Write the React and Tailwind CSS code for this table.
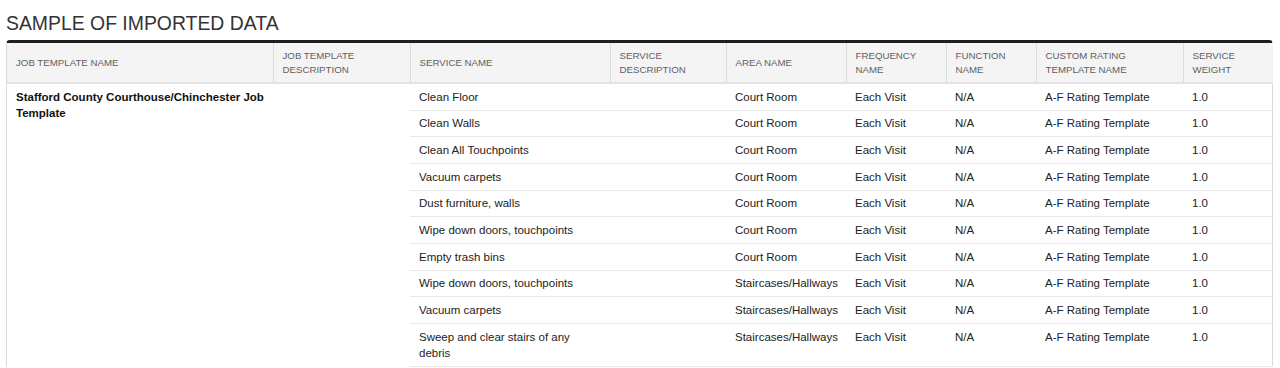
import React from "react";

const rows = [
  ["Clean Floor", "Court Room"],
  ["Clean Walls", "Court Room"],
  ["Clean All Touchpoints", "Court Room"],
  ["Vacuum carpets", "Court Room"],
  ["Dust furniture, walls", "Court Room"],
  ["Wipe down doors, touchpoints", "Court Room"],
  ["Empty trash bins", "Court Room"],
  ["Wipe down doors, touchpoints", "Staircases/Hallways"],
  ["Vacuum carpets", "Staircases/Hallways"],
  ["Sweep and clear stairs of any debris", "Staircases/Hallways"],
];

const headers = [
  "Job Template Name",
  "Job Template Description",
  "Service Name",
  "Service Description",
  "Area Name",
  "Frequency Name",
  "Function Name",
  "Custom Rating Template Name",
  "Service Weight",
];

const widths = [266, 137, 200, 116, 120, 100, 90, 147, 90];

export default function App() {
  return (
    <div
      className="bg-white w-[1280px] h-[368px] overflow-hidden"
      style={{ fontFamily: '"Liberation Sans", Arial, sans-serif' }}
    >
      <h1 className="pt-[12px] pl-[6px] text-[19.4px] leading-[22px] text-[#333] font-normal mb-[6px]">
        SAMPLE OF IMPORTED DATA
      </h1>
      <div className="ml-[6px] w-[1267px] border-t-[3px] border-t-[#1e1e1e] border-x border-x-[#d9d9d9] rounded-t-[4px]">
        <table className="w-full table-fixed border-collapse">
          <colgroup>
            {widths.map((w, i) => (
              <col key={i} style={{ width: w }} />
            ))}
          </colgroup>
          <thead>
            <tr className="bg-[#f4f4f4]">
              {headers.map((h, i) => (
                <th
                  key={i}
                  className={`text-left align-middle font-normal uppercase text-[9.7px] leading-[14px] text-[#5f5f5f] pl-[9px] pr-[8px] pt-[6px] pb-[5px] h-[40px] border-b-2 border-b-[#e3e3e3] ${
                    i > 0 ? "border-l border-l-[#dcdcdc]" : ""
                  }`}
                >
                  {h}
                </th>
              ))}
            </tr>
          </thead>
          <tbody className="text-[11.5px] leading-[16.67px] text-[#222]">
            {rows.map((r, i) => (
              <tr key={i}>
                {i === 0 && (
                  <>
                    <td
                      rowSpan={rows.length}
                      className="align-top pl-[9px] pr-[6px] pt-[4.5px] font-bold text-[#111]"
                    >
                      Stafford County Courthouse/Chinchester Job Template
                    </td>
                    <td rowSpan={rows.length} className="align-top" />
                  </>
                )}
                {[r[0], "", r[1], "Each Visit", "N/A", "A-F Rating Template", "1.0"].map(
                  (c, j) => (
                    <td
                      key={j}
                      className={`align-top pl-[9px] ${
                        j === 0 ? "pr-[12px]" : "pr-[6px]"
                      } py-[4.5px] border-b border-b-[#e8e8e8]`}
                    >
                      {c}
                    </td>
                  )
                )}
              </tr>
            ))}
          </tbody>
        </table>
      </div>
    </div>
  );
}
